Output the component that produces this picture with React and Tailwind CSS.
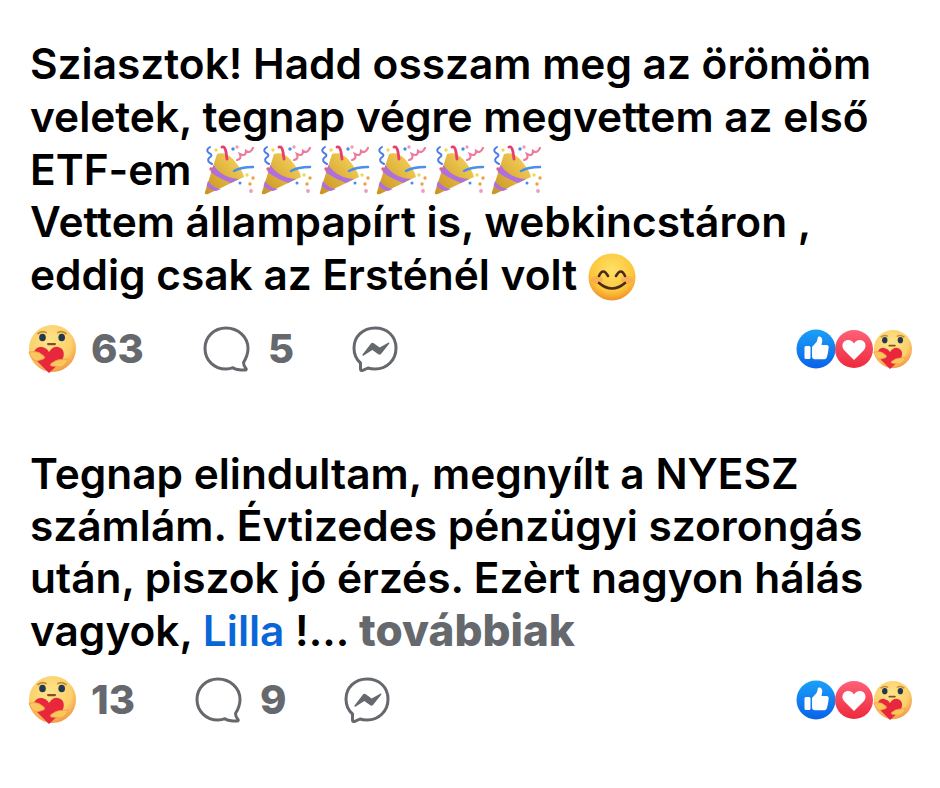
import React from "react";

function CareFace({ size = 48, id }) {
  return (
    <svg width={size} height={size} viewBox="0 0 48 48" className="shrink-0 block">
      <defs>
        <radialGradient id={id} cx="45%" cy="35%" r="65%">
          <stop offset="0%" stopColor="#fde48c" />
          <stop offset="70%" stopColor="#fbd06a" />
          <stop offset="100%" stopColor="#f59a48" />
        </radialGradient>
      </defs>
      <circle cx="24.500" cy="23.500" r="23.500" fill={`url(#${id})`} />
      <path d="M10 8.500q4-3 8-1M30 7.500q4-2 8 1" stroke="#c98a38" strokeWidth="1.800" fill="none" strokeLinecap="round" />
      <ellipse cx="14.500" cy="12.500" rx="3.300" ry="3.800" fill="#22384e" />
      <ellipse cx="33.700" cy="12.500" rx="3.300" ry="3.800" fill="#22384e" />
      <rect x="19" y="18" width="9" height="2.200" rx="1.100" fill="#8a4a22" />
      <path d="M21 48 L8 35 C3 27 8 21 14 22 Q19 23 21 27 Q25 21 30 22 C36 23 38 30 33 37 Z" fill="#e8263c" />
      <path d="M1 27q6-1 10 .5l5 3.500q1.500 2-.5 3L9 36Q3 35 1 27Z" fill="#fbc65c" stroke="#ee9a45" strokeWidth=".8" />
      <path d="M40 34q-8 0-12 1.500l-5 3q-1.500 2 .5 2.500l9 1q6-2 7.500-8Z" fill="#fbc65c" stroke="#ee9a45" strokeWidth=".8" />
    </svg>
  );
}

function CommentIcon() {
  return (
    <svg width="47" height="46" viewBox="0 0 47 46" className="shrink-0 block" fill="none">
      <path d="M23 2C11 2 2 11 2 22.500S11 43 23 43c3 0 5-.5 7-1.300 2 1.500 6 2.300 12 2.300 1.500 0 1.500-1 1-1.500-1.500-1.500-2.500-3.500-2.500-6C43 32.500 45 28 45 22.500 45 11 35 2 23 2Z" stroke="#65686c" strokeWidth="3" strokeLinejoin="round" />
    </svg>
  );
}

function MessengerIcon() {
  return (
    <svg width="46" height="46" viewBox="0 0 46 46" className="shrink-0 block" fill="none">
      <path d="M23 2C11 2 2 10.500 2 22c0 6 2.500 11.500 6.500 15v6c0 1.500 1 2 2.300 1.300L16 42c2 .7 4.500 1 7 1 12 0 21-9 21-21S35 2 23 2Z" stroke="#65686c" strokeWidth="3" strokeLinejoin="round" />
      <path d="M10.500 28.500 19 17.500c.7-1 1.800-1 2.700-.3l6 4.300 8.500-4.800c.8-.4 1.500.3 1 1L29 28c-.8 1-1.800 1-2.700.3l-6-4.300-8.500 5.500c-1 .6-1.800-.3-1.300-1Z" fill="#65686c" />
    </svg>
  );
}

function Reactions({ id }) {
  return (
    <div className="flex items-center">
      <svg width="40" height="40" viewBox="0 0 40 40" className="block shrink-0">
        <defs>
          <linearGradient id={`${id}l`} x1="0" y1="0" x2="0" y2="1">
            <stop offset="0%" stopColor="#1aa0f8" />
            <stop offset="100%" stopColor="#0a62e8" />
          </linearGradient>
        </defs>
        <circle cx="20" cy="20" r="19.500" fill={`url(#${id}l)`} />
        <rect x="8.500" y="17" width="6" height="13" rx="1.500" fill="#fff" />
        <path d="M16 18l4.500-5c1-1.500 1-4 1.500-5 2-1.500 4.500.5 4.300 3.500L25.500 16h5c2 0 2.800 2 2 3.500-.2 3-1 7-2 9.500-.6 1-1.500 1.300-2.500 1.300H19c-1.800 0-3-1-3-3Z" fill="#fff" />
      </svg>
      <svg width="38" height="40" viewBox="0 0 38 40" className="block shrink-0 -ml-px">
        <defs>
          <linearGradient id={`${id}h`} x1="0" y1="0" x2="0" y2="1">
            <stop offset="0%" stopColor="#ff6078" />
            <stop offset="100%" stopColor="#ee2a3c" />
          </linearGradient>
        </defs>
        <circle cx="19" cy="20" r="19" fill={`url(#${id}h)`} />
        <path d="M19 31 L9 21c-3-3.500-1.500-9.500 3.500-10 3-.3 5 1 6.500 3.500C20.500 12 22.500 10.700 25.500 11c5 .5 6.500 6.500 3.500 10Z" fill="#fff" />
      </svg>
      <CareFace size={39} id={`${id}c`} />
    </div>
  );
}

function Popper({ n }) {
  const g = `pop${n}`;
  return (
    <svg width="52" height="52" viewBox="0 0 52 52" className="block mr-[5.500px] shrink-0 translate-y-[1px]">
      <defs>
        <linearGradient id={g} x1="0" y1="1" x2="1" y2="0">
          <stop offset="0%" stopColor="#c8921e" />
          <stop offset="100%" stopColor="#f8d860" />
        </linearGradient>
      </defs>
      <path d="M2 47 Q1 50 5 49 L41 32 Q40 26 30 14 Q22 6 14 9 Z" fill={`url(#${g})`} />
      <path d="M10.500 20 Q19 33 36 34 L28 38 Q15 33 7.500 27ZM5 36 Q10 43 18 44 L13 46 Q7 45 3.500 41Z" fill="#b070dc" />
      <path d="M19 2Q22 1 23 7L24 14" stroke="#e83e6c" strokeWidth="2.800" fill="none" strokeLinecap="round" />
      <path d="M7 2Q2 5 6 8 11 10 6 13 3 16 9 19" stroke="#4a7ce8" strokeWidth="2" fill="none" strokeLinecap="round" />
      <path d="M31 26Q38 22 50 22" stroke="#4a90e8" strokeWidth="2.500" fill="none" strokeLinecap="round" />
      <path d="M34 15Q39 14 37 9 43 12 43 6 47 9 50 3" stroke="#ee7a9c" strokeWidth="2.200" fill="none" strokeLinecap="round" />
      <circle cx="8" cy="24" r="1.700" fill="#ee5a7a" />
      <circle cx="13" cy="5" r="1.700" fill="#f0d850" />
      <circle cx="30" cy="4" r="1.700" fill="#3f8ef0" />
      <circle cx="34" cy="2" r="1.700" fill="#f09ab8" />
      <circle cx="37" cy="38" r="1.500" fill="#3f8ef0" />
      <circle cx="44" cy="30" r="1.700" fill="#f0d850" />
      <circle cx="50" cy="33" r="1.700" fill="#f0a040" />
      <circle cx="47" cy="39" r="1.700" fill="#f0a040" />
      <circle cx="48" cy="46" r="1.900" fill="#f09ab8" />
    </svg>
  );
}

function Smile() {
  return (
    <svg width="48" height="48" viewBox="0 0 48 48" className="inline-block align-[-11px]">
      <defs>
        <radialGradient id="sm" cx="50%" cy="35%" r="65%">
          <stop offset="0%" stopColor="#ffe168" />
          <stop offset="70%" stopColor="#fcc63a" />
          <stop offset="100%" stopColor="#f2902a" />
        </radialGradient>
      </defs>
      <circle cx="24" cy="24" r="23.500" fill="url(#sm)" />
      <ellipse cx="9" cy="27" rx="6" ry="4" fill="#f89a5a" opacity=".55" />
      <ellipse cx="39" cy="27" rx="6" ry="4" fill="#f89a5a" opacity=".55" />
      <path d="M11 23q4-9 9 0M28 23q5-9 9 0" stroke="#4a2a18" strokeWidth="2.600" fill="none" strokeLinecap="round" />
      <path d="M11 30q13 11 26 0" stroke="#4a2a18" strokeWidth="2.600" fill="none" strokeLinecap="round" />
    </svg>
  );
}

function ActionRow({ count, commentCount, id, countGap, commentGap, commentToMessenger, countWidth }) {
  return (
    <div className="flex items-center justify-between pl-[28px] pr-[28px]">
      <div className="flex items-center font-extrabold text-[#65686c] text-[40px]">
        <CareFace id={id} />
        <span className="leading-[48px] ml-[15px]" style={{ width: countWidth }}>{count}</span>
        <span style={{ marginLeft: countGap }}><CommentIcon /></span>
        <span className="leading-[48px]" style={{ marginLeft: commentGap }}>{commentCount}</span>
        <span style={{ marginLeft: commentToMessenger }}><MessengerIcon /></span>
      </div>
      <Reactions id={id + "r"} />
    </div>
  );
}

export default function App() {
  return (
    <div className="w-[940px] h-[788px] bg-white overflow-hidden pt-[37px] text-black font-[640] text-[42.400px] leading-[53px]" style={{ fontFamily: "Inter, 'Noto Sans', sans-serif" }}>
      <div className="pl-[30px] whitespace-nowrap">
        <div>Sziasztok! Hadd osszam meg az örömöm</div>
        <div>veletek, tegnap végre megvettem az első</div>
        <div className="flex items-center h-[53px]">
          <span className="mr-[11px]">ETF-em</span>
          {[1, 2, 3, 4, 5, 6].map((n) => <Popper key={n} n={n} />)}
        </div>
        <div className="-mt-px">Vettem állampapírt is, webkincstáron ,</div>
        <div>eddig csak az Ersténél volt <Smile /></div>
      </div>
      <div className="mt-[24px]">
        <ActionRow id="a" count="63" commentCount="5" countWidth={51} countGap={61} commentGap={18} commentToMessenger={58} />
      </div>
      <div className="pl-[30px] whitespace-nowrap mt-[75px] leading-[52px]">
        <div>Tegnap elindultam, megnyílt a NYESZ</div>
        <div>számlám. Évtizedes pénzügyi szorongás</div>
        <div>után, piszok jó érzés. Ezèrt nagyon hálás</div>
        <div>vagyok, <span className="text-[#0a66d6]">Lilla</span> !... <span className="text-[#65686c] font-extrabold text-[44px]">továbbiak</span></div>
      </div>
      <div className="mt-[19px]">
        <ActionRow id="b" count="13" commentCount="9" countWidth={43} countGap={61} commentGap={18} commentToMessenger={58} />
      </div>
    </div>
  );
}
